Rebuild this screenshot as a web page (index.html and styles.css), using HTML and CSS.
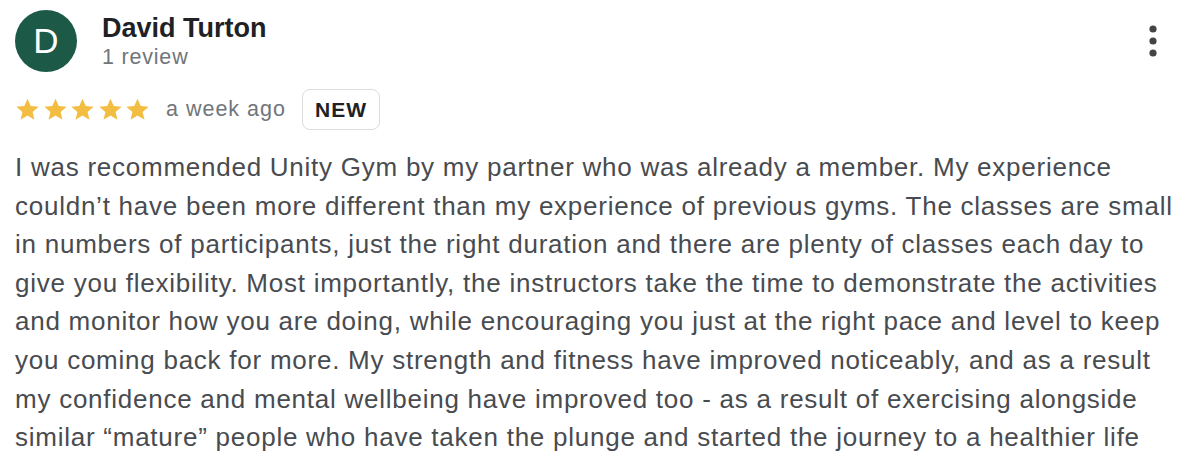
FILE: index.html
```html
<!DOCTYPE html>
<html lang="en">
<head>
<meta charset="utf-8">
<title>Review</title>
<link rel="stylesheet" href="styles.css">
</head>
<body>
<div class="review">
  <div class="header">
    <div class="avatar">D</div>
    <div class="who">
      <div class="name">David Turton</div>
      <div class="count">1 review</div>
    </div>
    <div class="menu" aria-label="More">
      <svg width="10" height="34" viewBox="0 0 10 34"><circle cx="5" cy="5" r="3.6" fill="#444"/><circle cx="5" cy="17" r="3.6" fill="#444"/><circle cx="5" cy="29" r="3.6" fill="#444"/></svg>
    </div>
  </div>
  <div class="meta">
    <div class="stars">
      <svg viewBox="0 0 24 24" width="25" height="25"><path d="M12 1.6l3.1 7 7.6.7-5.8 5 1.8 7.5L12 17.8l-6.7 4 1.8-7.5-5.8-5 7.6-.7z" fill="#f3bd41"/></svg>
      <svg viewBox="0 0 24 24" width="25" height="25"><path d="M12 1.6l3.1 7 7.6.7-5.8 5 1.8 7.5L12 17.8l-6.7 4 1.8-7.5-5.8-5 7.6-.7z" fill="#f3bd41"/></svg>
      <svg viewBox="0 0 24 24" width="25" height="25"><path d="M12 1.6l3.1 7 7.6.7-5.8 5 1.8 7.5L12 17.8l-6.7 4 1.8-7.5-5.8-5 7.6-.7z" fill="#f3bd41"/></svg>
      <svg viewBox="0 0 24 24" width="25" height="25"><path d="M12 1.6l3.1 7 7.6.7-5.8 5 1.8 7.5L12 17.8l-6.7 4 1.8-7.5-5.8-5 7.6-.7z" fill="#f3bd41"/></svg>
      <svg viewBox="0 0 24 24" width="25" height="25"><path d="M12 1.6l3.1 7 7.6.7-5.8 5 1.8 7.5L12 17.8l-6.7 4 1.8-7.5-5.8-5 7.6-.7z" fill="#f3bd41"/></svg>
    </div>
    <span class="when">a week ago</span>
    <span class="badge">NEW</span>
  </div>
  <p class="text">I was recommended Unity Gym by my partner who was already a member. My experience couldn’t have been more different than my experience of previous gyms. The classes are small in numbers of participants, just the right duration and there are plenty of classes each day to give you flexibility. Most importantly, the instructors take the time to demonstrate the activities and monitor how you are doing, while encouraging you just at the right pace and level to keep you coming back for more. My strength and fitness have improved noticeably, and as a result my confidence and mental wellbeing have improved too - as a result of exercising alongside similar “mature” people who have taken the plunge and started the journey to a healthier life</p>
</div>
</body>
</html>
```

FILE: styles.css
```css
html, body {
  margin: 0;
  padding: 0;
  background: #ffffff;
}
body {
  font-family: "Liberation Sans", Arial, Helvetica, sans-serif;
  overflow: hidden;
}
.review {
  padding: 10px 20px 0 15px;
}
.header {
  display: flex;
  align-items: flex-start;
}
.avatar {
  width: 62px;
  height: 62px;
  border-radius: 50%;
  background: #1c5a47;
  color: #ffffff;
  font-size: 35px;
  line-height: 62px;
  text-align: center;
  flex: none;
}
.who {
  margin-left: 25px;
  padding-top: 3px;
  flex: 1;
}
.name {
  font-size: 27px;
  font-weight: bold;
  line-height: 30px;
  color: #202124;
}
.count {
  font-size: 21.5px;
  letter-spacing: 0.8px;
  line-height: 28px;
  color: #70757a;
}
.menu {
  margin-top: 14px;
  margin-right: 22px;
  display: flex;
}
.meta {
  display: flex;
  align-items: center;
  margin-top: 17px;
  height: 41px;
}
.stars {
  display: flex;
  gap: 2.5px;
}
.stars svg {
  display: block;
}
.when {
  margin-left: 16px;
  font-size: 21.5px;
  letter-spacing: 1px;
  color: #70757a;
}
.badge {
  margin-left: 16px;
  box-sizing: border-box;
  height: 41px;
  padding: 0 12px;
  border: 1px solid #dadce0;
  border-radius: 8px;
  font-size: 21px;
  letter-spacing: 1px;
  font-weight: bold;
  color: #202124;
  line-height: 39px;
}
.text {
  margin: 18px 0 0 0;
  font-size: 26px;
  letter-spacing: 0.75px;
  line-height: 38.6px;
  color: #484b4f;
}
```
